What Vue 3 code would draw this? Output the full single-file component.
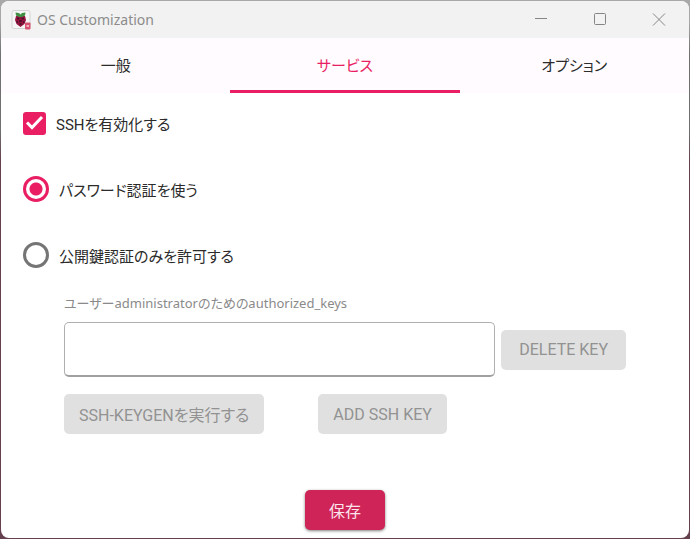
<script setup>
import { ref } from "vue";

const tabs = ["一般", "サービス", "オプション"];
const activeTab = ref("サービス");

const sshEnabled = ref(true);
const authMode = ref("password");
const authModes = [
  { value: "password", label: "パスワード認証を使う" },
  { value: "publickey", label: "公開鍵認証のみを許可する" },
];
const authorizedKey = ref("");

function save() {
  console.log("TODO save", sshEnabled.value, authMode.value);
}
</script>

<template>
  <div class="desktop">
    <div class="window">
      <header class="title-bar">
        <svg class="app-icon" viewBox="0 0 20 20" aria-hidden="true">
          <rect x="1" y="0.5" width="18" height="18" rx="2" fill="#f6f6f6" stroke="#d4d4d4" />
          <path d="M5 6h9l1 4-1.500 4-4 3-4-3L4 10z" fill="#96133f" />
          <path d="M4.500 2.500 8 3l1.500 1.500L11 3l3.500-.5-.5 3-3 1.500H8L5 5.500z" fill="#3f8f45" />
          <path d="M6 8.500h2.500M10.500 8.500H13M8 11h3M5.500 12h1.500M12 12h1.500M8.500 14h2" stroke="#421329" stroke-width="1.500" />
          <rect x="14" y="12.500" width="5.500" height="7" rx="1" fill="#d8506f" />
          <path d="M15.500 15h2.500v2h-2.500z" fill="#f0b3c0" />
        </svg>
        <h1>OS Customization</h1>
        <div class="window-controls">
          <button type="button" aria-label="Minimize">
            <svg viewBox="0 0 14 14"><path d="M1 5.500h12" /></svg>
          </button>
          <button type="button" aria-label="Maximize">
            <svg viewBox="0 0 14 14"><rect x="1.500" y="0.500" width="11" height="11" rx="1" /></svg>
          </button>
          <button type="button" aria-label="Close">
            <svg viewBox="0 0 14 14"><path d="M1 0.500l12 12M13 0.500l-12 12" /></svg>
          </button>
        </div>
      </header>

      <nav class="tabs" role="tablist">
        <button
          v-for="tab in tabs"
          :key="tab"
          type="button"
          role="tab"
          :aria-selected="activeTab === tab"
          :class="{ active: activeTab === tab }"
          @click="activeTab = tab"
        >
          {{ tab }}
        </button>
      </nav>

      <form class="content" @submit.prevent="save">
        <label class="option check">
          <span class="mark">
            <input v-model="sshEnabled" type="checkbox" />
            <svg v-if="sshEnabled" viewBox="0 0 23 23" aria-hidden="true">
              <path d="M4 10.500l5 5L19 5" />
            </svg>
          </span>
          SSHを有効化する
        </label>
        <label v-for="mode in authModes" :key="mode.value" class="option radio">
          <input v-model="authMode" type="radio" name="auth" :value="mode.value" />
          {{ mode.label }}
        </label>

        <div class="keys">
          <label for="key" class="caption">ユーザーadministratorのためのauthorized_keys</label>
          <div class="key-row">
            <input id="key" v-model="authorizedKey" type="text" class="key-field" />
            <button type="button" class="btn wide" disabled>DELETE KEY</button>
          </div>
          <div class="key-actions">
            <button type="button" class="btn" disabled>SSH-KEYGENを実行する</button>
            <button type="button" class="btn" disabled>ADD SSH KEY</button>
          </div>
        </div>

        <button type="submit" class="btn save">保存</button>
      </form>
    </div>
  </div>
</template>

<style>
body {
  background-color: #65404f;
}
</style>

<style scoped>
.desktop {
  box-sizing: border-box;
  min-height: 100vh;
  padding: 1px;
  display: flex;
  background: linear-gradient(#a8a8a8 0 4%, #707070 10% 24%, #65404f 30% 100%);
  font-family: Roboto, "Noto Sans CJK JP", sans-serif;
  font-size: 16px;
  color: #2b2b2b;
}

button,
input {
  font: inherit;
  color: inherit;
}

.window {
  flex: 1;
  min-width: 0;
  display: flex;
  flex-direction: column;
  border-radius: 8px;
  overflow: hidden;
  background-color: #fff;
}

/* Title bar */
.title-bar {
  height: 37px;
  display: flex;
  align-items: center;
  padding-left: 10px;
  background-color: #f2f2f2;
}

.app-icon {
  width: 20px;
  height: 20px;
}

h1 {
  margin: 0 auto 0 6px;
  font-family: "Noto Sans", sans-serif;
  font-size: 14px;
  font-weight: 400;
  color: #8c8c8c;
}

.window-controls {
  display: flex;
  padding-right: 1px;
}

.window-controls button {
  width: 59px;
  height: 37px;
  padding: 0;
  border: 0;
  background: none;
  display: grid;
  place-items: center;
}

.window-controls svg {
  width: 14px;
  height: 14px;
  fill: none;
  stroke: #858585;
}

/* Tabs */
.tabs {
  display: flex;
  background-color: #fffbfe;
}

.tabs button {
  flex: 1;
  height: 55px;
  padding: 0;
  border: 0;
  border-bottom: 3px solid transparent;
  background: none;
  font-size: 15px;
  font-feature-settings: "palt";
}

.tabs button.active {
  color: #e91e63;
  border-bottom-color: #e91e63;
}

/* Options */
.content {
  flex: 1;
  display: flex;
  flex-direction: column;
  padding: 18px 22px 8px;
}

.option {
  height: 24px;
  display: flex;
  align-items: center;
  gap: 10px;
  margin-bottom: 42px;
  font-size: 15px;
  font-feature-settings: "palt";
}

.option:last-of-type {
  margin-bottom: 24px;
}

.option input {
  appearance: none;
  box-sizing: border-box;
  margin: 0;
}

.mark {
  display: grid;
}

.mark > * {
  grid-area: 1 / 1;
  width: 23px;
  height: 23px;
}

.mark input {
  border: 2px solid #757575;
  border-radius: 3px;
}

.mark input:checked {
  border-color: #e91e63;
  background-color: #e91e63;
}

.mark svg {
  pointer-events: none;
  fill: none;
  stroke: #fff;
  stroke-width: 3;
}

.radio input {
  width: 26px;
  height: 26px;
  border: 3px solid #757575;
  border-radius: 50%;
}

.radio input:checked {
  border-color: #e91e63;
  background: radial-gradient(circle, #e91e63 6px, transparent 7px);
}

/* Authorized keys */
.keys {
  margin: 0 41px;
}

.caption {
  display: block;
  margin-bottom: 7px;
  font-family: "Noto Sans", "Noto Sans CJK JP", sans-serif;
  font-size: 13px;
  line-height: 24px;
  color: #8a8a8a;
  font-feature-settings: "palt";
}

.key-row {
  display: flex;
  align-items: center;
  gap: 6px;
}

.key-field {
  flex: 1;
  min-width: 0;
  height: 55px;
  box-sizing: border-box;
  padding: 0 12px;
  border: 1px solid #b0b0b0;
  border-bottom: 2px solid #a0a0a0;
  border-radius: 5px;
  background-color: #fff;
}

.key-actions {
  display: flex;
  gap: 54px;
  margin-top: 17px;
}

.btn {
  height: 40px;
  padding: 0 15px;
  border: 0;
  border-radius: 5px;
  background-color: #e0e0e0;
  white-space: nowrap;
  font-feature-settings: "palt";
}

.btn:disabled {
  color: #929292;
}

.btn.wide {
  padding: 0 18px;
}

.btn.save {
  align-self: center;
  margin-top: auto;
  padding: 0 24px;
  background-color: #cf2457;
  color: #fbe4ec;
  box-shadow: 0 1px 3px rgba(0, 0, 0, 0.5);
}
</style>
